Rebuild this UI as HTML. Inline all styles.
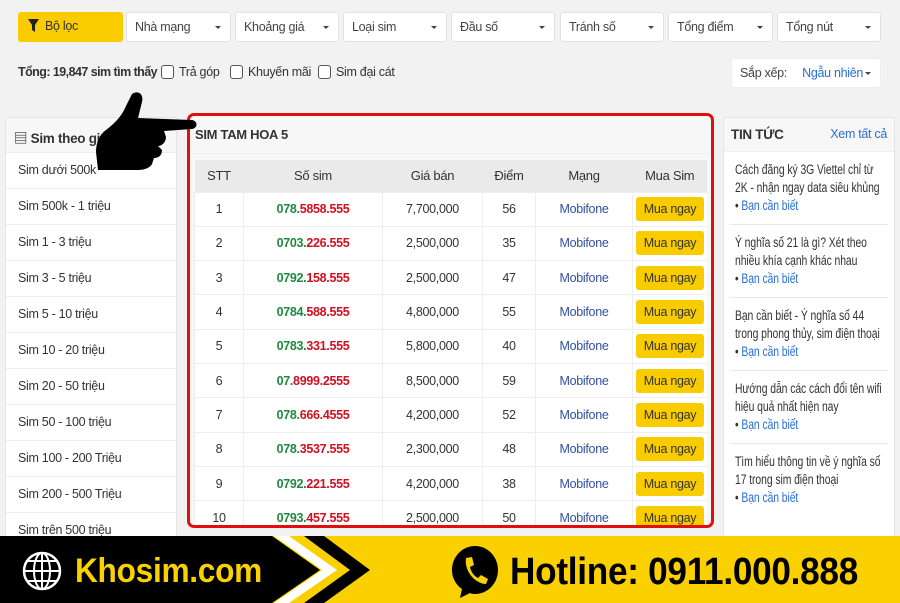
<!DOCTYPE html><html><head><meta charset="utf-8"><style>
*{box-sizing:border-box;margin:0;padding:0}
body{width:900px;height:603px;overflow:hidden;background:#f2f2f2;font-family:"Liberation Sans","Noto Sans CJK SC",sans-serif;font-size:13px;color:#333;position:relative;letter-spacing:-0.3px}
.a{position:absolute;white-space:nowrap}
.sel{position:absolute;top:12px;height:30px;background:#fff;border:1px solid #e2e2e2;border-radius:3px;padding:7px 8px;font-size:12.5px;color:#444;white-space:nowrap}
.sel:after{content:"";position:absolute;right:9px;top:13px;border:3.5px solid transparent;border-top-color:#444}
.cb{display:inline-block;width:13px;height:14px;border:1px solid #555;border-radius:3px;vertical-align:-3px;margin-right:5px;background:#fff}
.left{left:5px;top:117px;width:172px;height:420px;background:#fff;border:1px solid #e4e4e4}
.left div.i{height:36px;border-top:1px solid #ececec;padding:10px 12px;font-size:12.5px;color:#333}
.main{left:187px;top:113px;width:527px;height:415px;border:3px solid #e01010;border-radius:7px;background:#f7f7f7;overflow:hidden}
table{position:absolute;left:4px;top:44px;width:513px;border-collapse:collapse;background:#fff}
th{background:#eaeaea;height:32px;font-weight:normal;font-size:13px;color:#333}
td{height:34.3px;text-align:center;border-top:1px solid #eee;border-left:1px solid #eee;font-size:12.5px;white-space:nowrap}
.g{color:#1f8a3f;font-weight:bold}.r{color:#d01020;font-weight:bold}
.m{color:#3050a0}
.btn{display:inline-block;background:#f9cc00;border-radius:3px;padding:5px 8px;color:#333}
.right{left:723px;top:117px;width:172px;height:420px;background:#fff;border:1px solid #e4e4e4;overflow:hidden}
.n{margin:0 6px;padding:9px 5px 0;border-bottom:1px solid #e8e8e8;height:73px;overflow:hidden}
.n div{width:200px;white-space:nowrap;transform:scaleX(.77);transform-origin:left top;font-size:13.5px;line-height:18px;color:#333;letter-spacing:-0.1px}
.n span{color:#2a6fd6}
</style></head><body>
<div class="a" style="left:18px;top:12px;width:105px;height:30px;background:#f9cc00;border-radius:3px;padding:7px 10px;font-size:12.5px">
<svg width="11" height="13" viewBox="0 0 11 13" style="vertical-align:-2px;margin-right:6px"><path d="M0 0H11L7 6V13L4 11V6Z" fill="#222"/></svg>Bộ lọc</div>
<div class="sel" style="left:126px;width:105px">Nhà mạng</div>
<div class="sel" style="left:235px;width:104px">Khoảng giá</div>
<div class="sel" style="left:343px;width:104px">Loại sim</div>
<div class="sel" style="left:451px;width:104px">Đầu số</div>
<div class="sel" style="left:560px;width:104px">Tránh số</div>
<div class="sel" style="left:668px;width:105px">Tổng điểm</div>
<div class="sel" style="left:777px;width:104px">Tổng nút</div>
<div class="a" style="left:18px;top:65px;font-size:12.5px;letter-spacing:-0.55px"><b style="color:#333">Tổng: 19,847 sim tìm thấy</b></div>
<div class="a" style="left:161px;top:65px;font-size:12.5px"><span class="cb"></span>Trả góp</div>
<div class="a" style="left:230px;top:65px;font-size:12.5px"><span class="cb"></span>Khuyến mãi</div>
<div class="a" style="left:318px;top:65px;font-size:12.5px"><span class="cb"></span>Sim đại cát</div>
<div class="sel" style="left:731px;top:58px;width:150px;border-color:#eee">Sắp xếp: <span style="color:#2a6fd6;margin-left:12px">Ngẫu nhiên</span></div>
<div class="a left">
<div style="height:34px;padding:9px 8px;font-weight:bold;font-size:13.5px;background:#f7f7f7">▤ Sim theo giá</div>
<div class="i">Sim dưới 500k</div><div class="i">Sim 500k - 1 triệu</div><div class="i">Sim 1 - 3 triệu</div><div class="i">Sim 3 - 5 triệu</div><div class="i">Sim 5 - 10 triệu</div><div class="i">Sim 10 - 20 triệu</div><div class="i">Sim 20 - 50 triệu</div><div class="i">Sim 50 - 100 triệu</div><div class="i">Sim 100 - 200 Triệu</div><div class="i">Sim 200 - 500 Triệu</div><div class="i">Sim trên 500 triệu</div>
</div>
<div class="a main">
<div style="padding:11px 5px;font-weight:bold;font-size:13px;height:38px;border-bottom:1px solid #eee">SIM TAM HOA 5</div>
<table>
<tr><th style="width:49px">STT</th><th style="width:139px">Số sim</th><th style="width:100px">Giá bán</th><th style="width:53px">Điểm</th><th style="width:97px">Mạng</th><th>Mua Sim</th></tr>
<tr><td>1</td><td><span class="g">078.</span><span class="r">5858.555</span></td><td>7,700,000</td><td>56</td><td class="m">Mobifone</td><td><span class="btn">Mua ngay</span></td></tr>
<tr><td>2</td><td><span class="g">0703.</span><span class="r">226.555</span></td><td>2,500,000</td><td>35</td><td class="m">Mobifone</td><td><span class="btn">Mua ngay</span></td></tr>
<tr><td>3</td><td><span class="g">0792.</span><span class="r">158.555</span></td><td>2,500,000</td><td>47</td><td class="m">Mobifone</td><td><span class="btn">Mua ngay</span></td></tr>
<tr><td>4</td><td><span class="g">0784.</span><span class="r">588.555</span></td><td>4,800,000</td><td>55</td><td class="m">Mobifone</td><td><span class="btn">Mua ngay</span></td></tr>
<tr><td>5</td><td><span class="g">0783.</span><span class="r">331.555</span></td><td>5,800,000</td><td>40</td><td class="m">Mobifone</td><td><span class="btn">Mua ngay</span></td></tr>
<tr><td>6</td><td><span class="g">07.</span><span class="r">8999.2555</span></td><td>8,500,000</td><td>59</td><td class="m">Mobifone</td><td><span class="btn">Mua ngay</span></td></tr>
<tr><td>7</td><td><span class="g">078.</span><span class="r">666.4555</span></td><td>4,200,000</td><td>52</td><td class="m">Mobifone</td><td><span class="btn">Mua ngay</span></td></tr>
<tr><td>8</td><td><span class="g">078.</span><span class="r">3537.555</span></td><td>2,300,000</td><td>48</td><td class="m">Mobifone</td><td><span class="btn">Mua ngay</span></td></tr>
<tr><td>9</td><td><span class="g">0792.</span><span class="r">221.555</span></td><td>4,200,000</td><td>38</td><td class="m">Mobifone</td><td><span class="btn">Mua ngay</span></td></tr>
<tr><td>10</td><td><span class="g">0793.</span><span class="r">457.555</span></td><td>2,500,000</td><td>50</td><td class="m">Mobifone</td><td><span class="btn">Mua ngay</span></td></tr>
</table></div>
<div class="a right">
<div style="height:34px;padding:9px 7px;background:#f7f7f7;border-bottom:1px solid #eee;font-size:13.5px"><b>TIN TỨC</b><span style="float:right;color:#2a6fd6;font-size:12.5px">Xem tất cả</span></div>
<div class="n"><div>Cách đăng ký 3G Viettel chỉ từ<br>2K - nhận ngay data siêu khủng<br>• <span>Bạn cần biết</span></div></div>
<div class="n"><div>Ý nghĩa số 21 là gì? Xét theo<br>nhiều khía cạnh khác nhau<br>• <span>Bạn cần biết</span></div></div>
<div class="n"><div>Bạn cần biết - Ý nghĩa số 44<br>trong phong thủy, sim điện thoại<br>• <span>Bạn cần biết</span></div></div>
<div class="n"><div>Hướng dẫn các cách đổi tên wifi<br>hiệu quả nhất hiện nay<br>• <span>Bạn cần biết</span></div></div>
<div class="n" style="border:0"><div>Tìm hiểu thông tin về ý nghĩa số<br>17 trong sim điện thoại<br>• <span>Bạn cần biết</span></div></div>
</div>
<svg class="a" style="left:92px;top:90px" width="110" height="85" viewBox="0 0 110 85"><path d="M40 4C46 0 52 4 50 12L46 28L100 30C106 31 106 38 100 39L72 41L74 47C74 52 70 56 66 56L70 60C70 66 66 68 62 68L60 74C58 78 52 80 46 80L6 80L4 62C4 52 8 44 14 40C22 34 30 26 34 16Z" fill="#000"/></svg>
<svg class="a" style="left:0;top:536px" width="900" height="67" viewBox="0 0 900 67">
<rect width="900" height="67" fill="#fad000"/>
<polygon points="0,0 272,0 320,34 272,67 0,67" fill="#000"/>
<polygon points="274,0 289,0 337,34 289,67 274,67 322,34" fill="#fff"/>
<polygon points="304,0 324,0 370,34 324,67 304,67 350,34" fill="#000"/>
<circle cx="42" cy="35" r="18" fill="none" stroke="#fff" stroke-width="2.5"/><ellipse cx="42" cy="35" rx="8" ry="18" fill="none" stroke="#fff" stroke-width="2"/><path d="M24 35H60M27 25H57M27 45H57M42 17V53" stroke="#fff" stroke-width="2"/>
<text x="75" y="46" font-family="Liberation Sans" font-weight="bold" font-size="34" fill="#fad000" textLength="187" lengthAdjust="spacingAndGlyphs">Khosim.com</text>
<path d="M475 10C462 10 452 21 452 34C452 42 456 49 462 53L460 62L470 57C472 58 474 58 475 58C488 58 498 47 498 34C498 21 488 10 475 10Z" fill="#000"/>
<path d="M466 22L472 21L474 29L470 31C471 36 474 40 478 42L481 39L488 43L486 48C476 48 464 36 466 22Z" fill="#fad000"/>
<text x="510" y="48" font-family="Liberation Sans" font-weight="bold" font-size="38" fill="#000" textLength="348" lengthAdjust="spacingAndGlyphs">Hotline: 0911.000.888</text>
</svg>
</body></html>
